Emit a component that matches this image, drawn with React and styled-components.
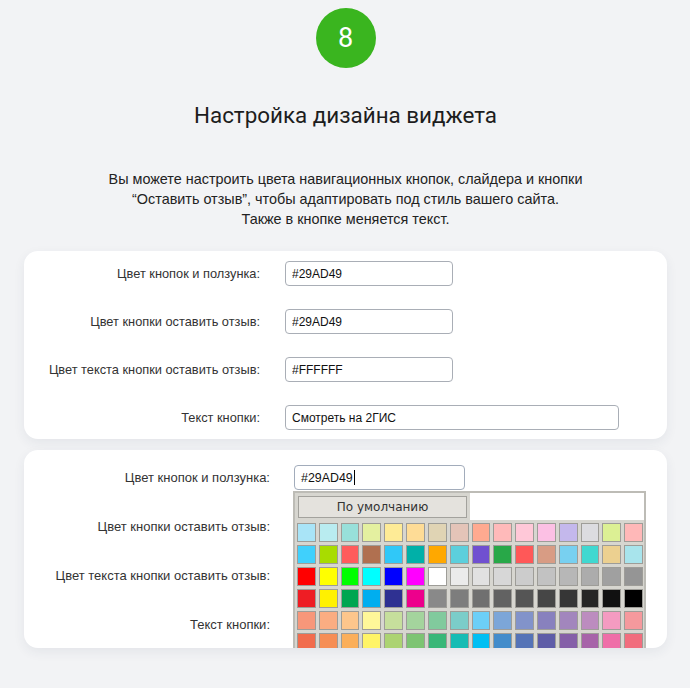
import React from "react";
import styled, { createGlobalStyle } from "styled-components";

const GlobalStyle = createGlobalStyle`
  body {
    margin: 0;
    background: #f2f3f5;
    font-family: "Liberation Sans", Arial, sans-serif;
    color: #222;
  }
`;

const Page = styled.div`
  padding: 8px 23px 40px 24px;
  display: flex;
  flex-direction: column;
  align-items: center;
`;

const StepBadge = styled.div`
  width: 60px;
  height: 60px;
  border-radius: 50%;
  background: #3ab51f;
  color: #fff;
  display: flex;
  align-items: center;
  justify-content: center;
  font-family: Roboto, sans-serif;
  font-size: 27px;
`;

const Title = styled.h2`
  margin: 35px 0 0;
  font-family: Roboto, sans-serif;
  font-weight: 400;
  font-size: 22.4px;
  line-height: 24px;
  color: #1d1d1d;
`;

const Lead = styled.p`
  margin: 42px 0 22px;
  text-align: center;
  font-size: 14.4px;
  line-height: 20px;
  color: #222;
`;

const Card = styled.div`
  align-self: stretch;
  background: #fff;
  border-radius: 14px;
  box-shadow: 0 4px 12px rgba(40, 60, 90, 0.07);
  padding: ${props => props.padding};
  margin-top: ${props => props.marginTop || "0px"};
  position: relative;
  overflow: hidden;
`;

const Form = styled.div`
  display: grid;
  grid-template-columns: ${props => props.labelWidth}px 1fr;
  column-gap: ${props => props.colGap}px;
  row-gap: ${props => props.rowGap}px;
  align-items: center;
  font-size: 12px;
`;

const Label = styled.label`
  text-align: right;
  color: #333;
  white-space: nowrap;
  font-size: ${props => props.size};
`;

const Input = styled.input`
  box-sizing: border-box;
  width: ${props => props.width}px;
  height: 25px;
  padding: 0 6px;
  border: 1px solid #a9aeb6;
  border-radius: 4px;
  background: #fff;
  font-family: "Liberation Sans", Arial, sans-serif;
  font-size: 12px;
  color: #111;
  outline: none;
`;

const FieldWrap = styled.div`
  position: relative;
  width: ${props => props.width}px;
`;

const ActiveField = styled.div`
  box-sizing: border-box;
  height: 25px;
  padding: 0 6px;
  border: 1px solid #a2acbb;
  border-radius: 4px;
  background: #fff;
  display: flex;
  align-items: center;
  font-size: 12.4px;
  color: #111;
`;

const Caret = styled.span`
  width: 1px;
  height: 15px;
  background: #000;
  margin-left: 1px;
`;

const Palette = styled.div`
  position: absolute;
  top: calc(100% + 1px);
  left: -1px;
  width: 353px;
  box-sizing: border-box;
  border: 2px solid #bdbcb6;
  background: #d7d6d0;
  z-index: 2;
`;

const PaletteHead = styled.div`
  display: flex;
  height: 27px;
`;

const DefaultCell = styled.div`
  padding: 3px 3px 2px 3px;
`;

const DefaultButton = styled.button`
  width: 169px;
  height: 22px;
  border: 1px solid #a3a29d;
  background: #e4e2dd;
  font-family: "DejaVu Sans", Verdana, sans-serif;
  font-size: 12px;
  color: #333;
  padding: 0;
`;

const Preview = styled.div`
  flex: 1;
  background: #fff;
`;

const SwatchGrid = styled.div`
  display: grid;
  grid-template-columns: repeat(16, 1fr);
  grid-auto-rows: 19px;
  gap: 3px;
  padding: 3px 1px 1px 2px;
`;

const Swatch = styled.div`
  border: 1px solid #9e9d98;
  background: ${props => props.color};
`;

const swatches = [
  "#a9e4f7", "#b9ecf0", "#98e0da", "#e4f0a0", "#feeb96", "#fedc96", "#e0d4b4", "#e4c4b8",
  "#ffaa90", "#ffbaba", "#ffc8d8", "#fcc0e4", "#c4b8ec", "#dcdce0", "#dcf094", "#ffb8b8",
  "#40d0fc", "#a8dc00", "#ff5c5c", "#b07050", "#30c8f8", "#00b0a8", "#ffa800", "#5ccfdc",
  "#7050d0", "#28a848", "#ff5858", "#d89c84", "#78d0f0", "#40d8d0", "#ecd090", "#a8e4ec",
  "#ff0000", "#ffff00", "#00ff00", "#00ffff", "#0000ff", "#ff00ff", "#ffffff", "#ebebeb",
  "#e1e1e1", "#d7d7d7", "#cccccc", "#c2c2c2", "#b7b7b7", "#acacac", "#a0a0a0", "#959595",
  "#ee1d24", "#fff100", "#00a650", "#00aeef", "#2f3192", "#ed008c", "#898989", "#7d7d7d",
  "#707070", "#626262", "#555555", "#464646", "#363636", "#262626", "#111111", "#000000",
  "#f7977a", "#fbad82", "#fdc68c", "#fff799", "#c6df9c", "#a4d49d", "#81ca9d", "#7bcdc9",
  "#6ccff7", "#7ca6d8", "#8293ca", "#8881be", "#a286bd", "#bc8cbf", "#f49bc1", "#f5999d",
  "#f16c4d", "#f68e55", "#fbaf5a", "#fff467", "#acd372", "#7dc473", "#39b778", "#16bcb4",
  "#00bff3", "#438ccb", "#5573b7", "#5e5ca7", "#855fa8", "#a763a9", "#ef6ea8", "#f16d7e"
];

const fields = [
  { label: "Цвет кнопок и ползунка:", value: "#29AD49", width: 168 },
  { label: "Цвет кнопки оставить отзыв:", value: "#29AD49", width: 168 },
  { label: "Цвет текста кнопки оставить отзыв:", value: "#FFFFFF", width: 168 },
  { label: "Текст кнопки:", value: "Смотреть на 2ГИС", width: 334 }
];

function ColorPalette() {
  return (
    <Palette>
      <PaletteHead>
        <DefaultCell>
          <DefaultButton>По умолчанию</DefaultButton>
        </DefaultCell>
        <Preview />
      </PaletteHead>
      <SwatchGrid>
        {swatches.map((c, i) => (
          <Swatch key={i} color={c} />
        ))}
      </SwatchGrid>
    </Palette>
  );
}

export default function App() {
  return (
    <>
      <GlobalStyle />
      <Page>
        <StepBadge>8</StepBadge>
        <Title>Настройка дизайна виджета</Title>
        <Lead>
          Вы можете настроить цвета навигационных кнопок, слайдера и кнопки
          <br />
          “Оставить отзыв”, чтобы адаптировать под стиль вашего сайта.
          <br />
          Также в кнопке меняется текст.
        </Lead>

        <Card padding="10px 0 9px">
          <Form labelWidth={236} colGap={25} rowGap={23}>
            {fields.map(f => (
              <React.Fragment key={f.label}>
                <Label size="12.8px">{f.label}</Label>
                <Input width={f.width} defaultValue={f.value} />
              </React.Fragment>
            ))}
          </Form>
        </Card>

        <Card padding="15px 0 11px" marginTop="11px">
          <Form labelWidth={246} colGap={24} rowGap={24}>
            {fields.map((f, i) => (
              <React.Fragment key={f.label}>
                <Label size="13px">{f.label}</Label>
                {i === 0 ? (
                  <FieldWrap width={171}>
                    <ActiveField>
                      {f.value}
                      <Caret />
                    </ActiveField>
                    <ColorPalette />
                  </FieldWrap>
                ) : (
                  <Input width={f.width} defaultValue={f.value} />
                )}
              </React.Fragment>
            ))}
          </Form>
        </Card>
      </Page>
    </>
  );
}
